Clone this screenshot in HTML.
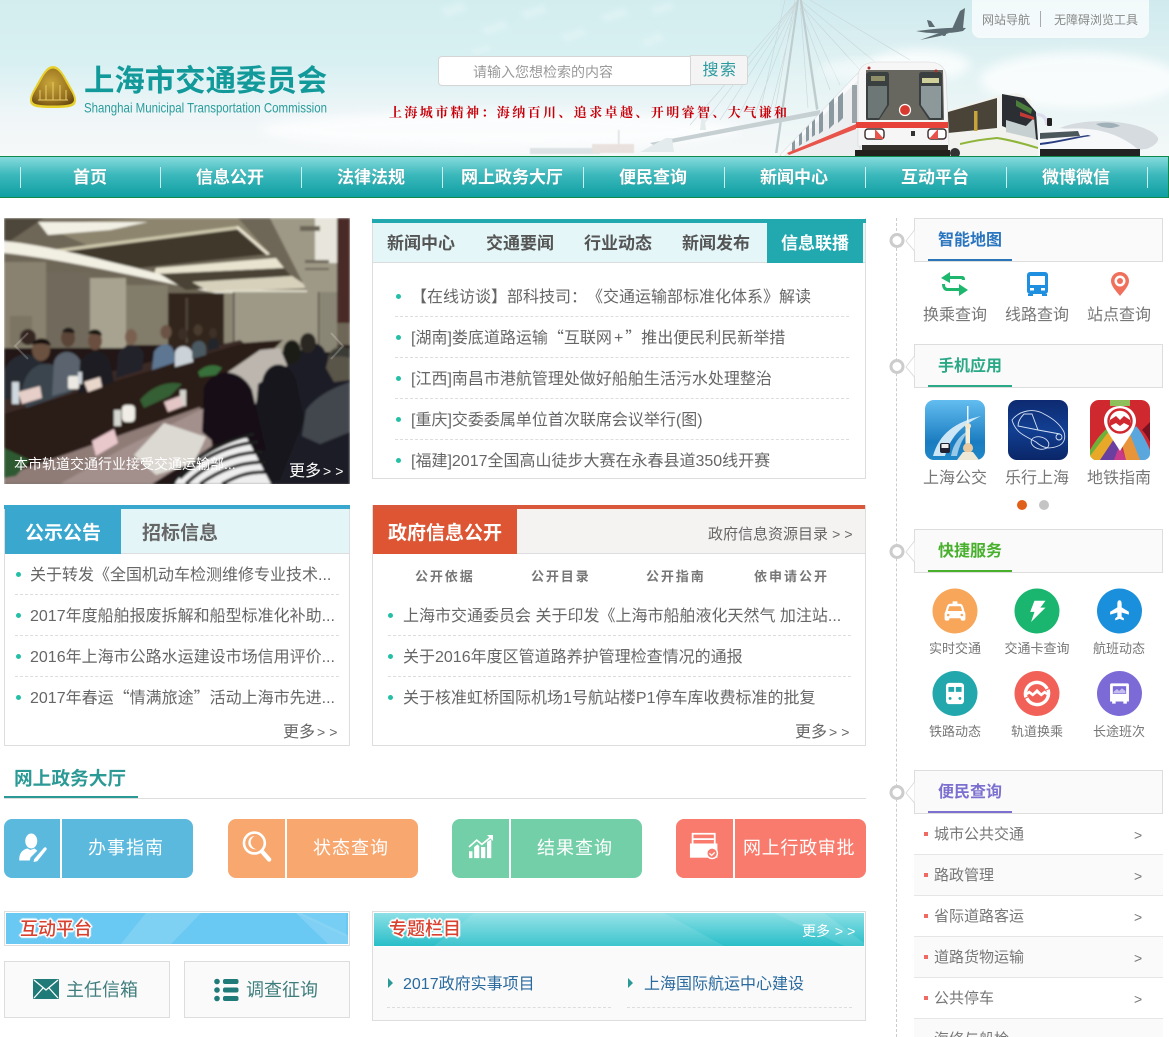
<!DOCTYPE html>
<html lang="zh-CN"><head><meta charset="utf-8"><title>上海市交通委员会</title>
<style>
html,body{margin:0;padding:0;background:#fff}
html{overflow:hidden;width:1169px;height:1037px}
body{position:relative;width:1169px;height:1037px;overflow:hidden;font-family:"Liberation Sans","Noto Sans CJK SC",sans-serif;color:#666;text-spacing-trim:space-all}
.t{position:absolute;white-space:nowrap;line-height:20px;height:20px}
.c{font-family:"Noto Sans CJK SC",sans-serif}
.b{position:absolute;box-sizing:border-box}
.f16{font-size:16px}.f14{font-size:14px}.f13{font-size:13px}.f18{font-size:18px}.f15{font-size:15px}.f17{font-size:17px}.f19{font-size:19px}
.w{font-weight:700}
.m{font-size:14px;letter-spacing:4px;margin-left:2px}
.dot{position:absolute;width:5px;height:5px;border-radius:50%;background:#25bfa8}
.dash{position:absolute;height:0;border-top:1px dashed #ddd}
.nav{position:absolute;top:158px;width:140px;text-align:center;line-height:40px;font-size:17px;font-weight:700;color:#fff;text-shadow:0 0 1px #5a9fa0}
.sep{position:absolute;top:167px;width:1px;height:21px;background:#cdeeee}
.hd{position:absolute;left:914px;width:249px;height:44px;box-sizing:border-box;border:1px solid #ddd;background:#fafafa}
.ul{position:absolute;left:928px;width:84px;height:2px}
.ttl{position:absolute;left:938px;font-size:16px;font-weight:700;white-space:nowrap;line-height:20px}
.row{position:absolute;left:914px;width:249px;height:41px;box-sizing:border-box;border-bottom:1px solid #e6e6e6}
.btn{position:absolute;top:819px;width:190px;height:59px;border-radius:8px;color:#fff;font-size:18px;line-height:58px}
.btn i{position:absolute;left:56px;top:0;width:2px;height:59px;background:#fff}
.btn span{position:absolute;white-space:nowrap;letter-spacing:1px}
.lab{text-align:center;width:90px}
</style></head><body>

<!-- header artwork -->
<svg class="b" style="left:0;top:0" width="1169" height="157" viewBox="0 0 1169 157">
<defs>
<linearGradient id="hb" x1="0" y1="0" x2="0" y2="1"><stop offset="0" stop-color="#d3edef"/><stop offset=".4" stop-color="#d8f0f2"/><stop offset=".75" stop-color="#f0f6f8"/><stop offset="1" stop-color="#f6f8f9"/></linearGradient>
<linearGradient id="hr" x1="0" y1="0" x2="0" y2="1"><stop offset="0" stop-color="#cfeaee"/><stop offset=".5" stop-color="#e4f3f4"/><stop offset="1" stop-color="#f4f8f8"/></linearGradient>
<radialGradient id="gold" cx=".45" cy=".4" r=".7"><stop offset="0" stop-color="#c9a53a"/><stop offset=".7" stop-color="#96701f"/><stop offset="1" stop-color="#6a4a14"/></radialGradient>
<filter id="bl"><feGaussianBlur stdDeviation="5"/></filter>
<filter id="bs"><feGaussianBlur stdDeviation=".6"/></filter>
<filter id="bm"><feGaussianBlur stdDeviation="2"/></filter>
</defs>
<rect width="1169" height="157" fill="url(#hb)"/>
<rect x="780" width="389" height="157" fill="url(#hr)"/>
<g filter="url(#bl)" fill="#fff" opacity=".75">
<ellipse cx="1080" cy="80" rx="100" ry="28"/><ellipse cx="920" cy="65" rx="50" ry="16"/><ellipse cx="500" cy="130" rx="240" ry="18"/>
</g>
<!-- faint leaf texture -->
<g fill="#e3f5f6" opacity=".55" filter="url(#bm)">
<path d="M440 8l22-6 6 8-22 8zM480 28l24-8 6 8-24 8zM520 12l22-8 6 8-22 8zM560 35l22-8 6 8-22 8zM600 15l24-8 6 8-24 8zM640 40l20-8 6 8-20 8zM470 50l18-6 5 6-18 6zM650 8l20-6 5 7-20 6z"/>
</g>
<!-- bridge -->
<g stroke="#c9d6d8" stroke-width=".6" fill="none">
<path d="M798 0L690 125M798 0L705 122M798 0L720 120M798 0L738 117M798 0L755 114M798 0L770 112M800 0L808 108M800 8L830 90M800 0L840 85M800 0L875 62M800 4L860 70M810 0L910 60M785 0L760 112M795 0L775 110"/>
</g>
<path d="M797 0L775 153h2.500L799 0zM800 0L816 110l2.500-1L802 0z" fill="#c0cdcf"/>
<path d="M650 143L820 110v5L655 146z" fill="#c6cfd1"/>
<path d="M640 152l26-14 6 0 2 14zM700 130l3-25 3 25z" fill="#e4ebec"/>
<!-- ship -->
<g filter="url(#bs)" opacity=".6"><rect x="530" y="148" width="70" height="6" fill="#ccd5d8"/><rect x="592" y="144" width="42" height="9" fill="#e0d2cc"/><rect x="618" y="130" width="1.500" height="14" fill="#c4cdcf"/></g>
<!-- plane -->
<g fill="#5d6b72">
<path d="M916 31c12-1 30-4 50-3l-3 3c-14 3-34 3-47 0z"/>
<path d="M952 29l8-18 5-3-2 20z"/><path d="M929 27l-2-7 4 1 4 6z"/><path d="M920 40l22-8 7 1-9 3z"/><circle cx="944" cy="34" r="2"/>
</g>
<!-- top-right box -->
<rect x="972" y="-8" width="177" height="46" rx="8" fill="#fff" opacity=".72"/>
<rect x="1040" y="11" width="1" height="16" fill="#aaa"/>
<!-- HSR -->
<g>
<path d="M1060 128c14-6 34-8 56-6 20 2 38 8 42 16 1 3-3 8-12 11l-10 1c-6-12-30-17-76-22z" fill="#d5dbdf"/>
<path d="M1096 124c8-2 18-2 24 2l-8 2c-6 0-12-1-16-4z" fill="#9fb0b8"/>
<path d="M1039 132c22-4 46-5 62-1 18 4 34 14 40 22l-3 3h-99z" fill="#f7f8f9"/>
<path d="M1040 133l38-2 2 5-40 3z" fill="#4c575c"/>
<path d="M1040 143c18-2 32-6 48-8l3 1c-16 2-32 7-51 9z" fill="#2a3d80"/>
<rect x="1040" y="149" width="100" height="7" fill="#222"/>
</g>
<!-- bus -->
<g>
<path d="M948 110L1000 95l18-2 12 6 8 24v33H948z" fill="#f2f3ee"/>
<path d="M948 112L997 98v30l-49 5z" fill="#4a4338"/>
<rect x="974" y="111" width="3.500" height="20" fill="#c7a33c"/>
<path d="M1002 94l22 4 12 14 2 28-36-14z" fill="#2b2f34"/>
<path d="M1006 120l20 6 8-8 2 21-30-7z" fill="#c6d0d1"/>
<path d="M1016 100l16 9-1 5-15-8z" fill="#4b7d3c"/>
<path d="M1020 112l14 5v3l-14-4z" fill="#c23a36"/>
<path d="M960 143c12-3 25-5 37-6 14 2 28 6 41 10v2c-14-4-28-8-41-10-12 1-25 3-37 6z" fill="#8fb43a"/>
<circle cx="955" cy="153" r="5" fill="#333"/>
<path d="M1036 113c8 0 12 3 12 12h-3c0-6-3-9-9-9z" fill="#dde"/><rect x="1047" y="118" width="5" height="8" fill="#222" rx="1"/>
</g>
<!-- metro side -->
<ellipse cx="880" cy="70" rx="60" ry="12" fill="#fff" opacity=".5" filter="url(#bl)"/>
<path d="M860 71L780 155l2 2h78z" fill="#eceef0" stroke="#c3cacd" stroke-width=".6"/>
<path d="M860 71L780 155l3 2L860 78z" fill="#f8f9fa"/>
<g fill="#8a98a0"><path d="M838 97l5-5v26l-5 5zM829 103l5-5v26l-5 5zM819 115l4-4v20l-4 3zM812 122l3-3v16l-3 2zM806 128l3-3v15l-3 2zM799 135l3-3v12l-3 2zM792 143l3-3v10l-3 2z"/></g>
<rect x="852" y="85" width="5" height="38" fill="#9aa3a8"/>
<path d="M856 124L787 153l2 2 67-26z" fill="#e8534a"/>
<!-- metro front -->
<path d="M858 74c2-8 8-12 20-12h50c10 0 16 4 18 12l3 72h-91z" fill="#f6f6f6" stroke="#d3d8da" stroke-width=".6"/>
<path d="M866 70h77l1 50h-78z" fill="#68675f"/>
<path d="M866 75c0-2 2-3 4-3h17c1 0 2 1 2 3v30l-10 15h-10c-2 0-3-1-3-3z" fill="#3a3f40"/>
<path d="M919 75c0-2 1-3 3-3h17c2 0 3 1 3 3l1 42c0 2-1 3-3 3h-11l-10-15z" fill="#3a3f40"/>
<path d="M868 86h19v19l-8 13h-11z" fill="#6d7776"/><path d="M921 86h20v32h-11l-9-13z" fill="#8d989b"/>
<rect x="871" y="76" width="14" height="5" fill="#8f8f68"/><rect x="922" y="78" width="17" height="5" fill="#d0d09a"/>
<circle cx="905" cy="110" r="5.500" fill="#d83a30" stroke="#fff" stroke-width="1.200"/>
<rect x="856" y="122" width="92" height="6" fill="#e7423a"/>
<rect x="865" y="129" width="19" height="10" rx="3" fill="#fff" stroke="#3b2b2b" stroke-width="1.400"/><path d="M875 129l9 10h-9z" fill="#e8534a"/>
<rect x="928" y="129" width="18" height="10" rx="3" fill="#fff" stroke="#3b2b2b" stroke-width="1.400"/><path d="M938 129l-9 10h9z" fill="#e8534a"/>
<rect x="862" y="145" width="86" height="5" fill="#33302c"/><rect x="855" y="150" width="95" height="7" fill="#221f1c"/>
<rect x="911" y="131" width="4" height="5" fill="#333"/>
<circle cx="869" cy="68" r="1.500" fill="#a33"/><circle cx="936" cy="71" r="1.500" fill="#a33"/>
<!-- logo emblem -->
<path d="M53 66c5 0 9 5 14 14 5 9 9 15 9 20 0 7-6 8-23 8s-23-1-23-8c0-5 4-11 9-20 5-9 9-14 14-14z" fill="#e8d02c"/>
<path d="M53 68.500c4 0 8 4 12 12 4 8 9 14 9 19 0 5-6 6-21 6s-21-1-21-6c0-5 5-11 9-19 4-8 8-12 12-12z" fill="url(#gold)"/>
<g stroke="#e6cd6a" stroke-width="1" fill="none"><path d="M40 100V90M46 100V85M53 100V82M60 100V85M66 100V90M38 100h30"/></g>
</svg>

<div class="t w" style="left:84px;top:63px;height:36px;line-height:36px;font-size:30.4px;color:#12999a;letter-spacing:0">上海市交通委员会</div>
<svg class="b" style="left:84px;top:99px" width="250" height="18"><text x="0" y="13.500" textLength="243" lengthAdjust="spacingAndGlyphs" font-family="Liberation Sans" font-size="14" fill="#2a9c9b">Shanghai Municipal Transportation Commission</text></svg>

<div class="b" style="left:438px;top:56px;width:253px;height:30px;background:#fff;border:1px solid #d5d5d5;border-radius:4px 0 0 4px"></div>
<div class="t f14" style="left:473px;top:62px;color:#999">请输入您想检索的内容</div>
<div class="b" style="left:690px;top:55px;width:58px;height:30px;background:#f4f4f4;border:1px solid #d5d5d5;border-radius:0 3px 3px 0;text-align:center;line-height:29px;font-size:16px;color:#2a9a9f;letter-spacing:1.500px;padding-left:2px">搜索</div>
<div class="t f13 w" style="left:389px;top:102px;color:#c8000a;letter-spacing:2.4px;font-family:'Noto Serif CJK SC',serif">上海城市精神&#xFF1A;海纳百川、追求卓越、开明睿智、大气谦和</div>
<div class="t" style="left:982px;top:10px;font-size:12px;color:#888">网站导航</div>
<div class="t" style="left:1054px;top:10px;font-size:12px;color:#888">无障碍浏览工具</div>

<!-- nav -->
<div class="b" style="left:0;top:156px;width:1169px;height:42px;border:1px solid #0f8a4a;border-left:0;background:linear-gradient(#84dadc,#3bb8bb 45%,#0f9fa3)"></div>
<div class="sep" style="left:20px"></div><div class="sep" style="left:160px"></div><div class="sep" style="left:301px"></div><div class="sep" style="left:442px"></div><div class="sep" style="left:583px"></div><div class="sep" style="left:724px"></div><div class="sep" style="left:865px"></div><div class="sep" style="left:1006px"></div><div class="sep" style="left:1147px"></div>
<div class="nav" style="left:20px">首页</div><div class="nav" style="left:160px">信息公开</div><div class="nav" style="left:301px">法律法规</div><div class="nav" style="left:442px">网上政务大厅</div><div class="nav" style="left:583px">便民查询</div><div class="nav" style="left:724px">新闻中心</div><div class="nav" style="left:865px">互动平台</div><div class="nav" style="left:1006px">微博微信</div>

<!-- photo -->
<svg class="b" style="left:4px;top:218px" width="346" height="266" viewBox="4 218 346 266">
<defs><filter id="p"><feGaussianBlur stdDeviation="1"/></filter></defs>
<g filter="url(#p)">
<rect x="4" y="218" width="346" height="130" fill="#6e6656"/>
<rect x="4" y="345" width="346" height="140" fill="#241915"/>
<!-- ceiling -->
<path d="M4 218h40L4 245z" fill="#4d463a"/>
<path d="M38 224L150 218h88l32 36-130 14z" fill="#8d856e"/>
<path d="M38 222h110l-38 8-62 5z" fill="#f2f0e4"/>
<path d="M47 250L238 228l32 26-130 14z" fill="#40392c"/>
<path d="M50 250L238 226l2 3L52 253z" fill="#cfc9ae"/>
<path d="M238 226l32 28-3 1-31-27z" fill="#eee8d4"/>
<path d="M4 241c60 6 120 26 228 50l-2 5C150 280 70 260 4 253z" fill="#f2efe3"/>
<path d="M156 268l120-10 8 10-130 6z" fill="#e9e4d0"/>
<path d="M160 274l124-6 12 14-110 8z" fill="#4a4334"/>
<path d="M192 282l100-6 18 12-100 4z" fill="#d7d1bb"/>
<path d="M225 290h85l2 4h-88z" fill="#e3dfcd"/>
<path d="M270 218h68v75h-30z" fill="#9e9986"/>
<path d="M315 218h22v45h-22z" fill="#e8e6dc"/>
<path d="M300 226h20v5h-20zM305 260h24v3h-24zM305 268h24v2h-24z" fill="#6a6556"/>
<rect x="337" y="218" width="13" height="105" fill="#4a2c25"/>
<!-- walls -->
<rect x="4" y="262" width="42" height="86" fill="#8a8270"/>
<rect x="46" y="272" width="44" height="76" fill="#716b5c"/>
<rect x="90" y="278" width="36" height="70" fill="#a8a391"/>
<rect x="126" y="285" width="42" height="60" fill="#827c6a"/>
<rect x="168" y="293" width="56" height="55" fill="#33261f"/>
<rect x="186" y="298" width="1.500" height="45" fill="#5a5044"/>
<rect x="224" y="293" width="10" height="50" fill="#8c8674"/>
<rect x="234" y="292" width="86" height="60" fill="#9e9987"/>
<rect x="320" y="292" width="17" height="60" fill="#8a8676"/>
<rect x="233" y="292" width="1.500" height="58" fill="#4c463a"/>
<rect x="318" y="292" width="1.500" height="55" fill="#4a4438"/>
<rect x="10" y="316" width="22" height="30" fill="#7c7564"/>
<!-- table -->
<path d="M4 410L243 343l40-3-60 60-110 50-60 34H4z" fill="#2a1a17"/>
<path d="M4 398L240 340l4 3L4 414z" fill="#3a2925"/>
<path d="M4 484v-8L200 407l8 30-90 47z" fill="#8f7b77"/>
<path d="M60 484l60-34 88-44 4 40-60 38z" fill="#a3908c"/>
<path d="M205 388l55-38 20-2 18 44-60 30z" fill="#bcb6ae"/>
<!-- seated row -->
<g>
<path d="M4 372c6-20 30-24 40-6l4 24-44 10z" fill="#262a30"/>
<ellipse cx="28" cy="337" rx="8" ry="8" fill="#342820"/>
<path d="M22 392c2-20 14-30 28-28 12 2 18 14 22 28l-46 16z" fill="#3b444d"/>
<ellipse cx="41" cy="350" rx="9" ry="11" fill="#6a5140"/><path d="M32 345c2-9 18-9 19 1-6-3-13-3-19-1z" fill="#15110f"/>
<path d="M54 362c4-14 24-14 28 4l4 20-34 10z" fill="#5a646e"/><ellipse cx="68" cy="338" rx="7" ry="9" fill="#5a4538"/><path d="M62 332c2-6 12-6 13 1z" fill="#1c1815"/>
<path d="M80 362c8-14 26-14 30 0l4 20-36 12z" fill="#1c1e23"/><ellipse cx="95" cy="341" rx="7" ry="9" fill="#6a5040"/><path d="M88 334c2-7 14-6 14 2-5-2-9-2-14-2z" fill="#141210"/>
<path d="M118 354c6-12 22-12 26 0l-2 16-26 8z" fill="#23242a"/><ellipse cx="131" cy="337" rx="6" ry="8" fill="#7a6050"/>
<path d="M154 352c6-10 18-10 20 0l2 10-24 8z" fill="#5d7692"/><ellipse cx="166" cy="332" rx="5.500" ry="7" fill="#6a5344"/>
<path d="M175 352c3-8 15-8 18 2v8l-18 5z" fill="#ccd3d8"/><ellipse cx="183" cy="334" rx="5" ry="6" fill="#3a2d25"/>
<path d="M192 346c3-7 12-7 14 1v8l-14 4z" fill="#4b5a62"/><ellipse cx="198" cy="330" rx="4.500" ry="5.500" fill="#4a3a2e"/>
<path d="M208 342c3-5 9-5 11 0v6l-11 3z" fill="#22262a"/><ellipse cx="213" cy="333" rx="4" ry="5" fill="#3c3026"/>
</g>
<!-- right people -->
<path d="M296 360c6-20 26-22 30-6l24 16v114H250l8-100z" fill="#1c1e25"/>
<ellipse cx="308" cy="343" rx="8" ry="10" fill="#2a2520"/>
<ellipse cx="292" cy="352" rx="9" ry="12" fill="#1d1a18"/>
<path d="M262 382c4-22 26-24 34-2l8 40-24 60-40 4 10-60z" fill="#14151a"/>
<path d="M306 410c14-18 34-24 44-28v50l-30 12-18-8z" fill="#42474e"/>
<path d="M330 352c6-8 20-8 20 4v24l-16 2-8-14z" fill="#5a5448"/>
<path d="M327 357c6-10 22-12 23-7v8c-8-3-16-1-23-1z" fill="#3a3a36"/>
<!-- woman with stripes -->
<path d="M204 388c8-20 36-22 48 2l14 60-34 8-30-26z" fill="#131115"/>
<path d="M175 484c8-22 36-42 72-46l24 46z" fill="#eee"/>
<g stroke="#1a1a1e" stroke-width="3.500" fill="none"><path d="M180 478c20-20 50-34 78-36M186 484c20-20 50-32 76-32M200 484c20-14 40-22 66-22M222 484c15-8 25-12 44-12M172 484c20-28 54-44 82-50"/></g>
<!-- paper, plant etc -->
<path d="M134 455l30-32 42 14-12 26-38 12z" fill="#dcd9d3"/>
<path d="M140 400c10-12 26-20 42-16l-12 12-26 12z" fill="#355f35"/>
<path d="M198 372c8-8 18-8 24-4l-6 7-16 2z" fill="#39703a"/>
<path d="M4 448l26 12-14 16-12 2z" fill="#2e5a33"/>
<rect x="122" y="405" width="13" height="17" rx="4" fill="#efede5"/>
<rect x="12" y="382" width="7" height="22" fill="#cfd8df"/><rect x="114" y="410" width="7" height="16" fill="#d6d6d0"/>
<rect x="68" y="376" width="11" height="13" rx="2" fill="#ece9e2"/><rect x="78" y="372" width="4" height="12" fill="#cfd5da"/>
<rect x="180" y="390" width="6" height="16" fill="#d5d3cc"/>
<path d="M18 392l22-6 2 12-20 6z" fill="#e6cfc8"/><path d="M84 382l16-5 2 10-14 5z" fill="#ead7cc"/>
<path d="M92 441l22-12 4 14-22 13z" fill="#e9c8cc"/><path d="M164 402l16-6 4 10-16 6z" fill="#e4c6c6"/>
</g>
<path d="M28 333l-13 13 13 13" stroke="#fff" stroke-opacity=".22" stroke-width="2" fill="none"/>
<path d="M331 333l12 13-12 13" stroke="#fff" stroke-opacity=".22" stroke-width="2" fill="none"/>
</svg>
<div class="t f14" style="left:14px;top:454px;color:#fff">本市轨道交通行业接受交通运输部...</div>
<div class="t f16" style="left:289px;top:461px;color:#fff">更多<span class="m">&gt;&gt;</span></div>

<!-- news -->
<div class="b" style="left:372px;top:218px;width:494px;height:261px;border:1px solid #ddd;border-top:0"></div>
<div class="b" style="left:372px;top:219px;width:494px;height:4px;background:#22a8af"></div>
<div class="b" style="left:373px;top:223px;width:492px;height:40px;background:#e4f6f8;border-bottom:1px solid #dcdcdc"></div>
<div class="b" style="left:767px;top:223px;width:96px;height:40px;background:#22a8af"></div>
<div class="t f17 w" style="left:387px;top:234px;color:#555">新闻中心</div>
<div class="t f17 w" style="left:486px;top:234px;color:#555">交通要闻</div>
<div class="t f17 w" style="left:584px;top:234px;color:#555">行业动态</div>
<div class="t f17 w" style="left:682px;top:234px;color:#555">新闻发布</div>
<div class="t f17 w" style="left:781px;top:234px;color:#fff">信息联播</div>
<i class="dot" style="left:396px;top:294px"></i><div class="t f16" style="left:411px;top:288px">【在线访谈】部科技司&#xFF1A;《交通运输部标准化体系》解读</div>
<div class="dash" style="left:395px;top:316px;width:454px"></div>
<i class="dot" style="left:396px;top:335px"></i><div class="t f16" style="left:411px;top:326px">[湖南]娄底道路运输<span class="c">“</span>互联网<span style="margin:0 2px">+</span><span class="c">”</span>推出便民利民新举措</div>
<div class="dash" style="left:395px;top:357px;width:454px"></div>
<i class="dot" style="left:396px;top:376px"></i><div class="t f16" style="left:411px;top:370px">[江西]南昌市港航管理处做好船舶生活污水处理整治</div>
<div class="dash" style="left:395px;top:398px;width:454px"></div>
<i class="dot" style="left:396px;top:417px"></i><div class="t f16" style="left:411px;top:411px">[重庆]交委委属单位首次联席会议举行(图)</div>
<div class="dash" style="left:395px;top:439px;width:454px"></div>
<i class="dot" style="left:396px;top:458px"></i><div class="t f16" style="left:411px;top:452px">[福建]2017全国高山徒步大赛在永春县道350线开赛</div>

<!-- left notice -->
<div class="b" style="left:4px;top:505px;width:346px;height:241px;border:1px solid #ddd;border-top:0"></div>
<div class="b" style="left:4px;top:505px;width:346px;height:4px;background:#3aa7cf"></div>
<div class="b" style="left:5px;top:509px;width:344px;height:45px;background:#e4f5f8;border-bottom:1px solid #ddd"></div>
<div class="b" style="left:5px;top:509px;width:116px;height:45px;background:#3aa7cf"></div>
<div class="t f19 w" style="left:25px;top:524px;color:#fff">公示公告</div>
<div class="t f19 w" style="left:142px;top:524px;color:#666">招标信息</div>
<i class="dot" style="left:16px;top:572px"></i><div class="t f16" style="left:30px;top:566px">关于转发《全国机动车检测维修专业技术...</div>
<div class="dash" style="left:15px;top:594px;width:324px"></div>
<i class="dot" style="left:16px;top:613px"></i><div class="t f16" style="left:30px;top:607px">2017年度船舶报废拆解和船型标准化补助...</div>
<div class="dash" style="left:15px;top:635px;width:324px"></div>
<i class="dot" style="left:16px;top:654px"></i><div class="t f16" style="left:30px;top:648px">2016年上海市公路水运建设市场信用评价...</div>
<div class="dash" style="left:15px;top:676px;width:324px"></div>
<i class="dot" style="left:16px;top:695px"></i><div class="t f16" style="left:30px;top:686px">2017年春运<span class="c">“</span>情满旅途<span class="c">”</span>活动上海市先进...</div>
<div class="t f16" style="left:283px;top:722px">更多<span class="m">&gt;&gt;</span></div>

<!-- gov -->
<div class="b" style="left:372px;top:505px;width:494px;height:241px;border:1px solid #ddd;border-top:0"></div>
<div class="b" style="left:373px;top:505px;width:492px;height:4px;background:#d9583c"></div>
<div class="b" style="left:373px;top:509px;width:492px;height:45px;background:#f5f3f1;border-bottom:1px solid #ddd"></div>
<div class="b" style="left:373px;top:509px;width:144px;height:45px;background:#dd5533"></div>
<div class="t f19 w" style="left:388px;top:524px;color:#fff">政府信息公开</div>
<div class="t f15" style="left:708px;top:524px">政府信息资源目录 <span class="m" style="margin-left:0">&gt;&gt;</span></div>
<div class="t f13 w" style="left:415px;top:567px;color:#777;letter-spacing:1.9px">公开依据</div>
<div class="t f13 w" style="left:531px;top:567px;color:#777;letter-spacing:1.9px">公开目录</div>
<div class="t f13 w" style="left:646px;top:567px;color:#777;letter-spacing:1.9px">公开指南</div>
<div class="t f13 w" style="left:754px;top:567px;color:#777;letter-spacing:2px">依申请公开</div>
<i class="dot" style="left:388px;top:613px"></i><div class="t f16" style="left:403px;top:607px">上海市交通委员会 关于印发《上海市船舶液化天然气 加注站...</div>
<div class="dash" style="left:388px;top:635px;width:463px"></div>
<i class="dot" style="left:388px;top:654px"></i><div class="t f16" style="left:403px;top:648px">关于2016年度区管道路养护管理检查情况的通报</div>
<div class="dash" style="left:388px;top:676px;width:463px"></div>
<i class="dot" style="left:388px;top:695px"></i><div class="t f16" style="left:403px;top:689px">关于核准虹桥国际机场1号航站楼P1停车库收费标准的批复</div>
<div class="t f16" style="left:795px;top:722px">更多<span class="m">&gt;&gt;</span></div>

<!-- online hall -->
<div class="t w" style="left:14px;top:769px;color:#2b9a96;font-size:18.7px">网上政务大厅</div>
<div class="b" style="left:4px;top:798px;width:862px;height:1px;background:#ddd"></div>
<div class="b" style="left:4px;top:796px;width:134px;height:2px;background:#2b9a96"></div>

<div class="btn" style="left:4px;width:189px;background:#5bb9de"><i></i><span style="left:84px">办事指南</span>
<svg style="position:absolute;left:13px;top:13px" width="30" height="30" viewBox="0 0 40 40"><ellipse cx="19" cy="12" rx="8" ry="10" fill="#fff"/><path d="M3 36c0-8 5-13 11-14l4 2 5-2c2 1 3 2 4 3l-9 9-1 4H3z" fill="#fff"/><path d="M23 36l13-15c2-2 5 1 3 3L27 39l-5 1z" fill="#fff"/></svg></div>
<div class="btn" style="left:228px;background:#f8a76f"><i style="left:57px"></i><span style="left:85px">状态查询</span>
<svg style="position:absolute;left:13px;top:11px" width="32" height="33" viewBox="0 0 36 38"><circle cx="15" cy="15" r="12" fill="none" stroke="#fff" stroke-width="3"/><path d="M8 15c0-5 3-8 7-8-3 2-5 5-4 9 1 3 3 6 7 6-5 1-10-2-10-7z" fill="#fff"/><path d="M24 25l8 9" stroke="#fff" stroke-width="5" stroke-linecap="round"/></svg></div>
<div class="btn" style="left:452px;background:#72cfa8"><i style="left:57px"></i><span style="left:85px">结果查询</span>
<svg style="position:absolute;left:15px;top:16px" width="28" height="24" viewBox="0 0 32 28"><path d="M2 14L11 6l6 5L28 2" stroke="#fff" stroke-width="2" fill="none"/><path d="M23 0h7v7z" fill="#fff"/><rect x="2" y="19" width="4" height="8" fill="#fff"/><path d="M8 14l4-3 2 2v14H8z" fill="#fff"/><rect x="16" y="14" width="5" height="13" fill="#fff"/><path d="M23 8l5-3v22h-5z" fill="#fff"/></svg></div>
<div class="btn" style="left:676px;background:#f87b6e"><i style="left:57px"></i><span style="left:67px;letter-spacing:.7px">网上行政审批</span>
<svg style="position:absolute;left:13px;top:13px" width="32" height="31" viewBox="0 0 36 35"><path d="M4 2h25v12H4z" fill="none" stroke="#fff" stroke-width="2"/><rect x="5" y="7" width="23" height="2" fill="#fff"/><rect x="1" y="13" width="31" height="16" fill="#fff"/><circle cx="26" cy="24" r="6" fill="#f87b6e" stroke="#fff" stroke-width="1.600"/><path d="M23 24l2.500 2.500L29 23" stroke="#fff" stroke-width="1.400" fill="none"/></svg></div>

<!-- interactive -->
<div class="b" style="left:4px;top:911px;width:346px;height:35px;border:1px solid #ddd;padding:1px;background:#fff"><div style="position:relative;width:100%;height:100%;overflow:hidden;background:#6ac9f3"><svg width="342" height="31" style="position:absolute;left:0;top:0"><path d="M140 0h150l50 24V0z" fill="#8ad6f6" opacity=".4"/><path d="M140 0L115 31h50l30-31z" fill="#a6e0f7" opacity=".35"/><path d="M295 0l47 22v9h-20l-32-31z" fill="#9fdcf6" opacity=".4"/></svg></div></div>
<div class="t f18" style="left:20px;top:919px;color:#d9412f;text-shadow:1px 0 #fff,-1px 0 #fff,0 1px #fff,0 -1px #fff,1px 1px #fff,-1px -1px #fff,1px -1px #fff,-1px 1px #fff,2px 0 1px #fff,-2px 0 1px #fff,0 2px 1px #fff,0 -2px 1px #fff;font-weight:500">互动平台</div>
<div class="b" style="left:4px;top:961px;width:166px;height:57px;background:#fafafa;border:1px solid #ddd"></div>
<div class="b" style="left:184px;top:961px;width:166px;height:57px;background:#fafafa;border:1px solid #ddd"></div>
<svg class="b" style="left:33px;top:979px" width="26" height="20" viewBox="0 0 26 20"><rect width="26" height="20" rx="1" fill="#1f7a78"/><path d="M1 1l12 10L25 1M1 19l9-10M25 19l-9-10" stroke="#fff" stroke-width="1.300" fill="none"/></svg>
<div class="t f18" style="left:66px;top:980px;color:#3f7d7d">主任信箱</div>
<svg class="b" style="left:214px;top:978px" width="25" height="24" viewBox="0 0 25 24"><g fill="#1f7a78"><circle cx="3" cy="3.500" r="2.800"/><circle cx="3" cy="12" r="2.800"/><circle cx="3" cy="20.500" r="2.800"/><rect x="9" y="1" width="15.500" height="5" rx="2"/><rect x="9" y="9.500" width="15.500" height="5" rx="2"/><rect x="9" y="18" width="15.500" height="5" rx="2"/></g></svg>
<div class="t f18" style="left:246px;top:980px;color:#3f7d7d">调查征询</div>

<!-- topics -->
<div class="b" style="left:372px;top:911px;width:494px;height:110px;border:1px solid #ddd;background:#fafafa"></div>
<div class="b" style="left:373px;top:912px;width:492px;height:35px;padding:1px;background:#fff"><div style="position:relative;width:100%;height:33px;overflow:hidden;background:linear-gradient(#8ce0e6,#28bfc8)"><svg width="490" height="33" style="position:absolute;left:0;top:0"><path d="M60 33L100 0h190l60 33z" fill="#fff" opacity=".1"/><path d="M400 0h50l40 30v3h-20z" fill="#fff" opacity=".12"/></svg></div></div>
<div class="t f18" style="left:389px;top:919px;color:#d9412f;font-weight:500;text-shadow:1px 0 #fff,-1px 0 #fff,0 1px #fff,0 -1px #fff,1px 1px #fff,-1px -1px #fff,1px -1px #fff,-1px 1px #fff,2px 0 1px #fff,-2px 0 1px #fff,0 2px 1px #fff,0 -2px 1px #fff">专题栏目</div>
<div class="t f14" style="left:802px;top:921px;color:#fff">更多 <span style="letter-spacing:4px;margin-left:1px">&gt;&gt;</span></div>
<svg class="b" style="left:388px;top:978px" width="5" height="10"><path d="M0 0l5 5-5 5z" fill="#2b9a96"/></svg>
<div class="t f16" style="left:403px;top:975px;color:#2a6a9e">2017政府实事项目</div>
<svg class="b" style="left:628px;top:978px" width="5" height="10"><path d="M0 0l5 5-5 5z" fill="#2b9a96"/></svg>
<div class="t f16" style="left:644px;top:975px;color:#2a6a9e">上海国际航运中心建设</div>
<div class="dash" style="left:387px;top:1007px;width:224px"></div>
<div class="dash" style="left:627px;top:1007px;width:225px"></div>

<!-- sidebar -->
<div class="b" style="left:896px;top:218px;height:819px;width:0;border-left:1px dashed #ccc"></div>

<div class="hd" style="top:218px"></div><div class="ul" style="top:259px;background:#2a75b8"></div><div class="ttl" style="top:231px;color:#2a75c0">智能地图</div>
<div class="hd" style="top:344px"></div><div class="ul" style="top:385px;background:#2ba886"></div><div class="ttl" style="top:357px;color:#2ba886">手机应用</div>
<div class="hd" style="top:529px"></div><div class="ul" style="top:570px;background:#48b02c"></div><div class="ttl" style="top:542px;color:#48b02c">快捷服务</div>
<div class="hd" style="top:770px"></div><div class="ul" style="top:811px;background:#7b6fd0"></div><div class="ttl" style="top:783px;color:#7b6fd0">便民查询</div>

<svg class="b" style="left:886px;top:218px" width="30" height="600" viewBox="0 0 30 600" fill="none">
<g><path d="M28.500 12L20 23l8.500 10" fill="#fff" stroke="#ddd"/><circle cx="11" cy="22.500" r="6" fill="#fff" stroke="#ccc" stroke-width="3"/></g>
<g transform="translate(0 126)"><path d="M28.500 12L20 23l8.500 10" fill="#fff" stroke="#ddd"/><circle cx="11" cy="22.500" r="6" fill="#fff" stroke="#ccc" stroke-width="3"/></g>
<g transform="translate(0 311)"><path d="M28.500 12L20 23l8.500 10" fill="#fff" stroke="#ddd"/><circle cx="11" cy="22.500" r="6" fill="#fff" stroke="#ccc" stroke-width="3"/></g>
<g transform="translate(0 552)"><path d="M28.500 12L20 23l8.500 10" fill="#fff" stroke="#ddd"/><circle cx="11" cy="22.500" r="6" fill="#fff" stroke="#ccc" stroke-width="3"/></g>
</svg>

<!-- map icons -->
<svg class="b" style="left:941px;top:271px" width="28" height="26" viewBox="0 0 28 26"><g fill="#1eb76e"><path d="M0 7L9 1v4h12c2 0 3 1 3 4h-3c0-1-1-1-2-1H9v4z"/><path d="M27 19l-9-6v4H7c-2 0-3-1-3-4H1c0 4 2 7 5 7h12v5z"/></g></svg>
<svg class="b" style="left:1027px;top:272px" width="21" height="24" viewBox="0 0 21 24"><rect width="21" height="22" rx="3" fill="#1f8fe0"/><rect x="3" y="4" width="15" height="9" fill="#fff"/><rect x="3" y="16" width="4" height="2.500" fill="#fff"/><rect x="14" y="16" width="4" height="2.500" fill="#fff"/><rect x="1" y="22" width="5" height="2" fill="#1f8fe0"/><rect x="15" y="22" width="5" height="2" fill="#1f8fe0"/></svg>
<svg class="b" style="left:1111px;top:272px" width="18" height="24" viewBox="0 0 18 24"><path d="M9 0c5 0 9 4 9 9 0 5-5 10-9 15C5 19 0 14 0 9c0-5 4-9 9-9z" fill="#f1705c"/><circle cx="9" cy="9" r="5.500" fill="#fff"/><circle cx="9" cy="9" r="3" fill="#f1705c"/></svg>
<div class="t f16 lab" style="left:910px;top:306px;color:#777">换乘查询</div>
<div class="t f16 lab" style="left:992px;top:306px;color:#777">线路查询</div>
<div class="t f16 lab" style="left:1074px;top:306px;color:#777">站点查询</div>

<!-- app icons -->
<svg class="b" style="left:925px;top:400px" width="60" height="60" viewBox="0 0 60 60"><defs><linearGradient id="a1" x1="0" y1="0" x2="0" y2="1"><stop offset="0" stop-color="#63bdf0"/><stop offset=".7" stop-color="#1a7cc0"/><stop offset="1" stop-color="#1f88c8"/></linearGradient></defs><rect width="60" height="60" rx="9" fill="url(#a1)"/><path d="M8 56C14 34 30 22 56 16 40 24 26 34 20 56z" fill="#dff1fb" opacity=".9"/><path d="M26 56c2-12 8-20 18-26-6 8-10 16-12 26z" fill="#cde8f7" opacity=".7"/><rect x="42" y="6" width="1.500" height="22" fill="#e8f4fb"/><rect x="40.500" y="24" width="4.500" height="26" fill="#f6edd6"/><circle cx="43" cy="26" r="3" fill="#f3e6c8"/><circle cx="43" cy="48" r="5" fill="#e8c8a0"/><path d="M32 60l6-8h10l6 8z" fill="#f0e8d6"/><rect x="15" y="43" width="10" height="10" rx="2" fill="#223"/><rect x="16.500" y="44" width="7" height="4" fill="#eee"/></svg>
<svg class="b" style="left:1008px;top:400px" width="60" height="60" viewBox="0 0 60 60"><defs><linearGradient id="a2" x1="0" y1="0" x2="0" y2="1"><stop offset="0" stop-color="#0d2a70"/><stop offset=".5" stop-color="#123f92"/><stop offset="1" stop-color="#0a2668"/></linearGradient></defs><rect width="60" height="60" rx="9" fill="url(#a2)"/><g stroke="#d5e2f5" stroke-width=".9" fill="none"><path d="M4 20c8-10 22-12 32-6 8 4 16 10 20 18 2 6 0 12-6 14-8 3-14 3-22-4C18 36 8 34 4 20z"/><path d="M16 14c-4 4-6 8-6 12l20 4-6-16z"/><ellipse cx="32" cy="43" rx="9" ry="6" transform="rotate(15 32 43)"/><circle cx="51" cy="37" r="3"/><path d="M30 30l22 4"/></g></svg>
<svg class="b" style="left:1090px;top:400px" width="60" height="60" viewBox="0 0 60 60"><rect width="60" height="60" rx="9" fill="#d0282f"/><path d="M0 50C8 36 16 28 24 24l6 20-10 16H6c-3 0-6-3-6-6z" fill="#6fb03a"/><path d="M0 56L20 30l10 14-8 16H4z" fill="#e9a928"/><path d="M10 60l16-24 4 10-6 14z" fill="#6b3fa0"/><path d="M36 60l-4-16 14-18c4 4 10 14 14 24v4c0 3-3 6-6 6z" fill="#5aa7de"/><path d="M36 60l-4-16 8-10 10 26z" fill="#e8943a"/><path d="M24 60l6-16 6 16z" fill="#c83b8a"/><path d="M52 30c4 4 6 8 8 12V22z" fill="#7a1020"/><rect x="20" y="0" width="20" height="6" fill="#8dbf5a"/><path d="M30 6c10 0 16 7 16 15 0 8-9 18-16 30C23 39 14 29 14 21c0-8 6-15 16-15z" fill="#fff"/><circle cx="30" cy="21" r="11.500" fill="none" stroke="#d0282f" stroke-width="2.400"/><path d="M20 20l6-4 4 4 4-4 6 4v6l-6-3-4 3-4-3-6 3z" fill="#d0282f"/></svg>
<div class="t f16 lab" style="left:910px;top:469px;color:#777">上海公交</div>
<div class="t f16 lab" style="left:992px;top:469px;color:#777">乐行上海</div>
<div class="t f16 lab" style="left:1074px;top:469px;color:#777">地铁指南</div>
<i class="b" style="left:1017px;top:500px;width:10px;height:10px;border-radius:50%;background:#e0601a"></i>
<i class="b" style="left:1039px;top:500px;width:10px;height:10px;border-radius:50%;background:#c4c4c4"></i>

<!-- quick services -->
<svg class="b" style="left:930px;top:586px" width="215" height="132" viewBox="0 0 215 132">
<circle cx="25" cy="25" r="22.500" fill="#f7a65a"/><circle cx="107" cy="25" r="22.500" fill="#1ab56f"/><circle cx="189.500" cy="25" r="22.500" fill="#1a8fdc"/>
<circle cx="25" cy="107.500" r="22.500" fill="#22a7ad"/><circle cx="107" cy="107.500" r="22.500" fill="#f26157"/><circle cx="189.500" cy="107.500" r="22.500" fill="#7c6bd6"/>
<g transform="translate(25 25) scale(.8) translate(-25 -25)"><path d="M22 13h6v3h3c2 0 3 1 4 3l2 7c1 1 1 2 1 3v6c0 1-1 2-2 2h-2c-1 0-2-1-2-2v-1H18v1c0 1-1 2-2 2h-2c-1 0-2-1-2-2v-6c0-1 0-2 1-3l2-7c1-2 2-3 4-3h3zm-4 6l-2 6h18l-2-6z" fill="#fff" fill-rule="evenodd"/><circle cx="16.500" cy="30" r="1.600" fill="#f7a65a"/><circle cx="33.500" cy="30" r="1.600" fill="#f7a65a"/></g>
<g transform="translate(107 25) scale(.85) translate(-109 -25)"><path d="M106 13h13l-6 8h6L102 38l4-12h-5z" fill="#fff"/></g>
<g transform="translate(189.500 25) scale(.72) translate(-189.500 -25)"><path d="M189.500 10c2 0 3 2 3 5v5l10 6v4l-10-3v6l3 2v3l-6-2-6 2v-3l3-2v-6l-10 3v-4l10-6v-5c0-3 1-5 3-5z" fill="#fff"/></g>
<g transform="translate(25 107.500) scale(.82) translate(-25 -107)"><rect x="14" y="94" width="22" height="26" rx="4" fill="#fff"/><rect x="17" y="99" width="7" height="6" fill="#22a7ad"/><rect x="26" y="99" width="7" height="6" fill="#22a7ad"/><circle cx="19" cy="113" r="1.800" fill="#22a7ad"/><circle cx="31" cy="113" r="1.800" fill="#22a7ad"/></g>
<g transform="translate(107 107.500) scale(.85) translate(-107 -107.500)"><path d="M94 112a13.500 13.500 0 0 1 25-10M120 103a13.500 13.500 0 0 1-25 10" fill="none" stroke="#fff" stroke-width="4"/><path d="M92 108l6-4 4 3 5-5 5 5 4-3 5 4v3l-5-3-4 3-5-4-5 4-4-3-6 3z" fill="#fff"/></g>
<g transform="translate(189.500 107.500) scale(.7) translate(-189.500 -107.500)"><path d="M178 93h23c1 0 2 1 2 2v24h-3v3h-5v-3h-11v3h-5v-3h-3V95c0-1 1-2 2-2z" fill="#fff"/><rect x="180" y="97" width="19" height="11" fill="#7c6bd6"/><path d="M181 105l5-4 3 3 4-4 5 4v3h-17z" fill="#c6bdf0"/></g>
</svg>
<div class="t f13 lab" style="left:910px;top:639px;color:#777">实时交通</div>
<div class="t f13 lab" style="left:992px;top:639px;color:#777">交通卡查询</div>
<div class="t f13 lab" style="left:1074px;top:639px;color:#777">航班动态</div>
<div class="t f13 lab" style="left:910px;top:722px;color:#777">铁路动态</div>
<div class="t f13 lab" style="left:992px;top:722px;color:#777">轨道换乘</div>
<div class="t f13 lab" style="left:1074px;top:722px;color:#777">长途班次</div>

<!-- list -->
<div class="row" style="top:814px;background:#fff"></div>
<div class="row" style="top:855px;background:#fafafa"></div>
<div class="row" style="top:896px;background:#fff"></div>
<div class="row" style="top:937px;background:#fafafa"></div>
<div class="row" style="top:978px;background:#fff"></div>
<div class="row" style="top:1019px;background:#fafafa"></div>
<i class="b" style="left:924px;top:832px;width:4px;height:4px;background:#ee6a62"></i><div class="t f15" style="left:934px;top:825px;color:#777">城市公共交通</div><div class="t f14" style="left:1134px;top:825px;color:#777">&gt;</div>
<i class="b" style="left:924px;top:873px;width:4px;height:4px;background:#ee6a62"></i><div class="t f15" style="left:934px;top:866px;color:#777">路政管理</div><div class="t f14" style="left:1134px;top:866px;color:#777">&gt;</div>
<i class="b" style="left:924px;top:914px;width:4px;height:4px;background:#ee6a62"></i><div class="t f15" style="left:934px;top:907px;color:#777">省际道路客运</div><div class="t f14" style="left:1134px;top:907px;color:#777">&gt;</div>
<i class="b" style="left:924px;top:955px;width:4px;height:4px;background:#ee6a62"></i><div class="t f15" style="left:934px;top:948px;color:#777">道路货物运输</div><div class="t f14" style="left:1134px;top:948px;color:#777">&gt;</div>
<i class="b" style="left:924px;top:996px;width:4px;height:4px;background:#ee6a62"></i><div class="t f15" style="left:934px;top:989px;color:#777">公共停车</div><div class="t f14" style="left:1134px;top:989px;color:#777">&gt;</div>
<div class="t f15" style="left:934px;top:1030px;color:#777">海修与船检</div>
</body></html>
